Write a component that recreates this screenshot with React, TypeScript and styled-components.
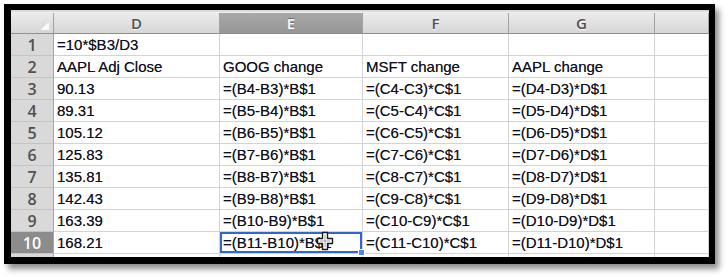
import styled, { createGlobalStyle } from "styled-components";

const GlobalStyle = createGlobalStyle`
  html, body {
    margin: 0;
    padding: 0;
    background: #ffffff;
  }
  body {
    font-family: "Liberation Sans", Arial, sans-serif;
  }
`;

const COLUMNS = "43px 166px 143px 146px 146px 54px";

const Page = styled.div`
  width: 728px;
  height: 277px;
  padding: 4px 0 0 4px;
  box-sizing: border-box;
`;

const Frame = styled.div`
  width: 711px;
  height: 260px;
  box-sizing: border-box;
  border-style: solid;
  border-color: #000;
  border-width: 6px 6px 7px 7px;
  box-shadow: 4px 5px 6px rgba(0, 0, 0, 0.45);
  overflow: hidden;
  background: #fff;
  display: flex;
  flex-direction: column;
`;

const TopStrip = styled.div`
  height: 3px;
  flex: none;
  background: linear-gradient(#cfcfcf, #f2f2f2);
`;

const Grid = styled.div`
  display: grid;
  grid-template-columns: ${COLUMNS};
  grid-auto-rows: 22px;
  grid-template-rows: 21px;
`;

const ColHeader = styled.div<{ $active?: boolean }>`
  box-sizing: border-box;
  border-right: 1px solid #a3a3a3;
  border-bottom: 1px solid #8f8f8f;
  background: ${(p) =>
    p.$active
      ? "linear-gradient(#a9a9a9, #959595)"
      : "linear-gradient(#ececec, #d6d6d6)"};
  color: ${(p) => (p.$active ? "#fdfdfd" : "#505050")};
  text-shadow: ${(p) => (p.$active ? "0 -1px 0 #6d6d6d" : "0 1px 0 #fff")};
  font-family: "Open Sans", "Liberation Sans", sans-serif;
  font-weight: 600;
  font-size: 15px;
  display: flex;
  align-items: center;
  justify-content: center;
  position: relative;
`;

const Corner = styled(ColHeader)`
  &::after {
    content: "";
    position: absolute;
    right: 4px;
    bottom: 3px;
    width: 0;
    height: 0;
    border-left: 9px solid transparent;
    border-bottom: 9px solid #fafafa;
    filter: drop-shadow(0 0 0.5px #9a9a9a);
  }
`;

const RowHeader = styled.div<{ $active?: boolean }>`
  box-sizing: border-box;
  border-right: 1px solid #a6a6a6;
  border-bottom: 1px solid #c4c4c4;
  background: ${(p) => (p.$active ? "#8c8c8c" : "#d9d9d9")};
  color: ${(p) => (p.$active ? "#ffffff" : "#505050")};
  font-family: "Open Sans", "Liberation Sans", sans-serif;
  font-weight: 600;
  font-size: 16px;
  display: flex;
  align-items: center;
  justify-content: center;
`;

const Cell = styled.div<{ $selected?: boolean }>`
  box-sizing: border-box;
  border-right: 1px solid #d3d3d3;
  border-bottom: 1px solid #d3d3d3;
  color: #0e0e1c;
  font-size: 15px;
  padding: 0 4px 0 3px;
  display: flex;
  align-items: center;
  white-space: nowrap;
  overflow: visible;
  position: relative;
  text-shadow: 0 0 0.4px rgba(0, 0, 0, 0.6);
  box-shadow: ${(p) => (p.$selected ? "inset 0 0 0 2px #3466d2" : "none")};
`;

const FillHandle = styled.span`
  position: absolute;
  right: -3px;
  bottom: -3px;
  width: 5px;
  height: 5px;
  background: #4f86e3;
  border: 1px solid #fff;
  z-index: 2;
`;

const Cursor = styled.svg`
  position: absolute;
  left: 96px;
  top: -1px;
  z-index: 3;
`;

type Row = { n: number; cells: string[] };

const f = (col: string, r: number) => `=(${col}${r + 1}-${col}${r})*${col}$1`;

const prices = ["90.13", "89.31", "105.12", "125.83", "135.81", "142.43", "163.39", "168.21"];

const rows: Row[] = [
  { n: 1, cells: ["=10*$B3/D3", "", "", "", ""] },
  { n: 2, cells: ["AAPL Adj Close", "GOOG change", "MSFT change", "AAPL change", ""] },
  ...prices.map((p, i) => {
    const r = i + 3;
    return { n: r, cells: [p, f("B", r), f("C", r), f("D", r), ""] };
  }),
  { n: 11, cells: ["", f("B", 11), f("C", 11), f("D", 11), ""] },
];

const PlusCursor = () => (
  <Cursor width="18" height="20" viewBox="0 0 18 20">
    <path
      d="M6.5 1.5h5v6h5v5h-5v6h-5v-6h-5v-5h5z"
      fill="#ffffff"
      stroke="#1a1a1a"
      strokeWidth="1.4"
      strokeLinejoin="round"
    />
    <path d="M9 4v12M4 10h10" stroke="#1a1a1a" strokeWidth="0.8" opacity="0.5" />
  </Cursor>
);

const App = () => {
  return (
    <Page>
      <GlobalStyle />
      <Frame>
        <TopStrip />
        <Grid>
          <Corner />
          <ColHeader>D</ColHeader>
          <ColHeader $active>E</ColHeader>
          <ColHeader>F</ColHeader>
          <ColHeader>G</ColHeader>
          <ColHeader />
          {rows.map((row) => [
            <RowHeader key={`h${row.n}`} $active={row.n === 10}>
              {row.n}
            </RowHeader>,
            ...row.cells.map((c, i) => {
              const selected = row.n === 10 && i === 1;
              return (
                <Cell key={`${row.n}-${i}`} $selected={selected}>
                  {c}
                  {selected && <FillHandle />}
                  {selected && <PlusCursor />}
                </Cell>
              );
            }),
          ])}
        </Grid>
      </Frame>
    </Page>
  );
};

export default App;
